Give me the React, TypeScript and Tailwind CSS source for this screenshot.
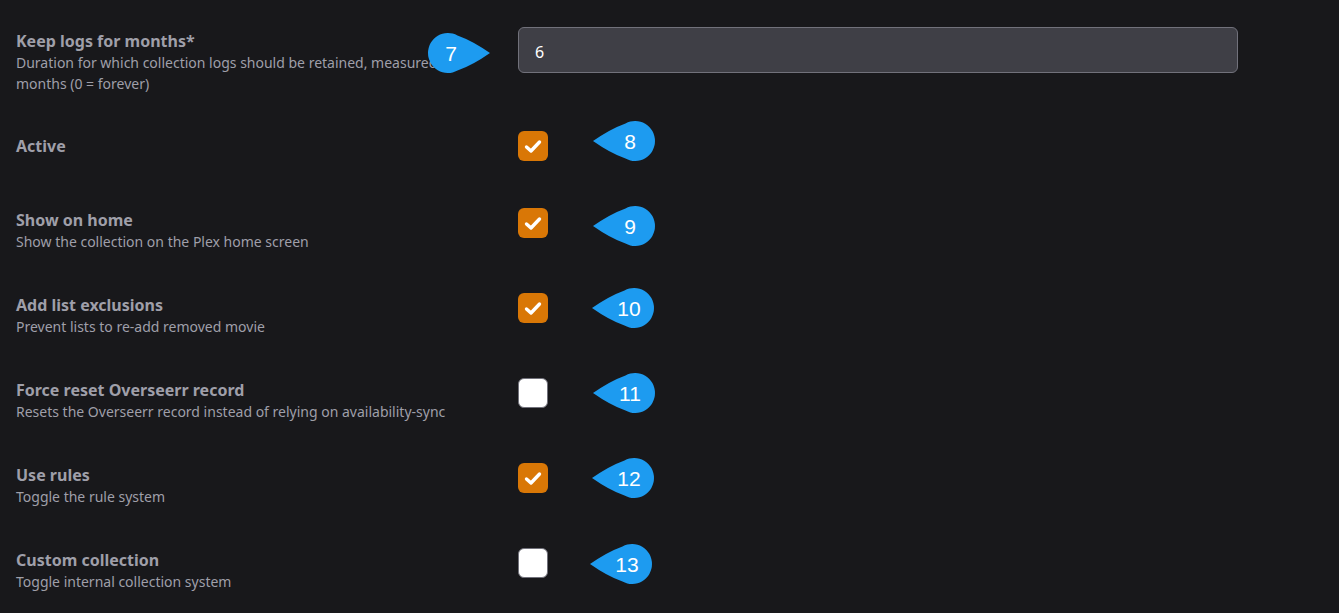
import React from 'react'

interface Row {
  label: string
  description?: string
  checked: boolean
  top: number
}

const rows: Row[] = [
  { label: 'Active', checked: true, top: 131 },
  { label: 'Show on home', description: 'Show the collection on the Plex home screen', checked: true, top: 208 },
  { label: 'Add list exclusions', description: 'Prevent lists to re-add removed movie', checked: true, top: 293 },
  { label: 'Force reset Overseerr record', description: 'Resets the Overseerr record instead of relying on availability-sync', checked: false, top: 378 },
  { label: 'Use rules', description: 'Toggle the rule system', checked: true, top: 463 },
  { label: 'Custom collection', description: 'Toggle internal collection system', checked: false, top: 548 },
]

const badges = [
  { n: '8', x: 593, y: 121 },
  { n: '9', x: 593, y: 206 },
  { n: '10', x: 592, y: 288 },
  { n: '11', x: 593, y: 373 },
  { n: '12', x: 592, y: 458 },
  { n: '13', x: 590, y: 544 },
]

function Badge({ n, x, y, dir = 'left' }: { n: string; x: number; y: number; dir?: 'left' | 'right' }) {
  return (
    <svg
      className="absolute"
      style={{ left: x, top: y }}
      width="63"
      height="40"
      viewBox="0 0 63 40"
    >
      <g transform={dir === 'right' ? 'translate(63 0) scale(-1 1)' : undefined}>
        <path d="M0 20 Q17 8 32.5 2.4 A20 20 0 1 1 32.5 37.6 Q17 32 0 20 Z" fill="#1d9bf0" />
      </g>
      <text
        x={dir === 'right' ? 24 : 37}
        y="27.5"
        textAnchor="middle"
        fill="#fff"
        fontSize="21"
        fontFamily="'Liberation Sans', Arial, sans-serif"
      >
        {n}
      </text>
    </svg>
  )
}

function Checkbox({ checked }: { checked: boolean }) {
  if (checked) {
    return (
      <div className="w-[30px] h-[30px] rounded-[6px] bg-[#d97706] flex items-center justify-center">
        <svg width="18" height="15" viewBox="0 0 18 15">
          <path d="M2.5 8 L7 12 L15.5 3" fill="none" stroke="#fff" strokeWidth="3.4" strokeLinecap="round" strokeLinejoin="round" />
        </svg>
      </div>
    )
  }
  return <div className="w-[30px] h-[30px] rounded-[6px] bg-white border border-zinc-500" />
}

export default function App() {
  return (
    <div
      className="relative w-[1339px] h-[613px] bg-[#18181b] overflow-hidden"
      style={{ fontFamily: "'Noto Sans', 'Open Sans', sans-serif" }}
    >
      <div className="flex pt-[27px] pl-4">
        <div className="w-[502px] pt-[2px]">
          <div className="text-base font-bold leading-6 text-zinc-400">Keep logs for months*</div>
          <div className="text-sm leading-[21px] -mt-[1px] text-zinc-400 w-[440px]">
            Duration for which collection logs should be retained, measured in months (0 = forever)
          </div>
        </div>
        <div className="w-[720px] h-[46px] rounded-md bg-[#3f3f46] border border-zinc-500 flex items-center px-4 pt-[3px] text-base text-white">
          6
        </div>
      </div>

      {rows.map((r) => (
        <div
          key={r.label}
          className="absolute left-4 flex"
          style={{ top: r.top }}
        >
          <div className={`w-[502px] ${r.description ? '' : 'pt-[3px]'}`}>
            <div className="text-base font-bold leading-6 text-zinc-400">{r.label}</div>
            {r.description && <div className="text-sm leading-5 text-zinc-400">{r.description}</div>}
          </div>
          <Checkbox checked={r.checked} />
        </div>
      ))}

      <Badge n="7" x={427} y={33} dir="right" />
      {badges.map((b) => (
        <Badge key={b.n} n={b.n} x={b.x} y={b.y} />
      ))}
    </div>
  )
}
